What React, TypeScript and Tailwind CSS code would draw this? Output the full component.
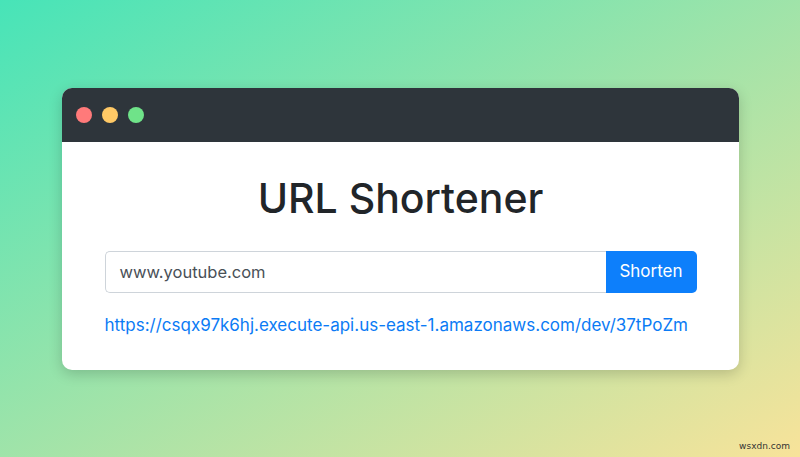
export default function App() {
  return (
    <div className="relative flex h-[457px] w-[800px] items-start justify-center overflow-hidden bg-[linear-gradient(to_bottom_right,#47e4b8,#f8e39a)] pt-[88px] font-['Inter',sans-serif]">
      <div className="w-[677px] overflow-hidden rounded-[10px] bg-white shadow-[0_4px_14px_rgba(0,0,0,0.18)]">
        {/* title bar */}
        <div className="flex h-[54px] items-center gap-[10px] bg-[#2e353b] pl-[14px]">
          <span className="h-4 w-4 rounded-full bg-[#ff7a7a]" />
          <span className="h-4 w-4 rounded-full bg-[#ffc966]" />
          <span className="h-4 w-4 rounded-full bg-[#6fe389]" />
        </div>

        <div className="pb-[33px] pl-[43px] pr-[42px] pt-[31px]">
          <h1 className="text-center text-[41px] font-medium leading-[50px] text-[#212529]">
            URL Shortener
          </h1>

          <div className="mt-[28px] flex h-[42px]">
            <div className="flex flex-1 items-center rounded-l-[5px] border border-r-0 border-[#ced4da] px-[14px] text-[16.5px] text-[#495057]">
              www.youtube.com
            </div>
            <button className="w-[91px] rounded-r-[5px] bg-[#0d7ffb] text-[17px] text-white">
              Shorten
            </button>
          </div>

          <a className="mt-[20px] block text-[17px] leading-[24px] text-[#0b7bf5]">
            https://csqx97k6hj.execute-api.us-east-1.amazonaws.com/dev/37tPoZm
          </a>
        </div>
      </div>

      <span className="absolute bottom-[4px] right-[10px] font-['DejaVu_Sans',sans-serif] text-[9px] text-[#333]">
        wsxdn.com
      </span>
    </div>
  );
}
